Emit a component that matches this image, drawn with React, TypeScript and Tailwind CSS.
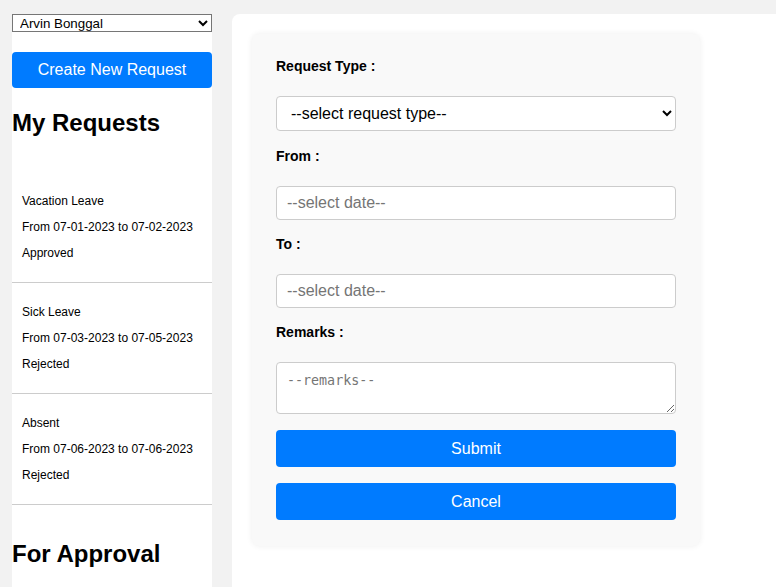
import React from 'react';

const requests = [
  { type: 'Vacation Leave', from: '07-01-2023', to: '07-02-2023', status: 'Approved' },
  { type: 'Sick Leave', from: '07-03-2023', to: '07-05-2023', status: 'Rejected' },
  { type: 'Absent', from: '07-06-2023', to: '07-06-2023', status: 'Rejected' },
];

export default function App() {
  return (
    <div className="min-h-screen bg-[#f2f2f2] flex gap-[20px] pt-[14px] pl-[12px] text-black font-['Liberation_Sans',Arial,sans-serif]">
      {/* Sidebar */}
      <aside className="w-[200px] shrink-0 bg-white">
        <select className="block w-full h-[18px] border border-[#767676] bg-white pl-[3px] text-[13.33px] leading-[16px]">
          <option>Arvin Bonggal</option>
        </select>
        <button className="mt-[20px] w-full h-[36px] rounded bg-[#007bff] text-white text-[16px]">
          Create New Request
        </button>
        <h2 className="mt-[21px] text-[24px] leading-[28px] font-bold">My Requests</h2>
        <div className="mt-[35px]">
          {requests.map((r, i) => (
            <div key={i} className="px-[10px] py-[22px] flex flex-col gap-[12px] border-b border-[#ccc] text-[12px] leading-[14px]">
              <p>{r.type}</p>
              <p>
                From {r.from} to {r.to}
              </p>
              <p>{r.status}</p>
            </div>
          ))}
        </div>
        <h2 className="mt-[35px] text-[24px] leading-[28px] font-bold">For Approval</h2>
      </aside>

      {/* Main */}
      <main className="flex-1 bg-white rounded-tl-lg p-[20px]">
        <div className="w-[448px] bg-[#f9f9f9] rounded-lg shadow-[0_0_6px_rgba(0,0,0,0.07)] px-[24px] pt-[24px] pb-[26px]">
          <label className="block text-[14px] leading-[16px] font-bold mb-[22px]">Request Type :</label>
          <select className="block w-full h-[35px] border border-[#ccc] rounded bg-white px-[10px] text-[16px]">
            <option>--select request type--</option>
          </select>

          <label className="block mt-[17px] text-[14px] leading-[16px] font-bold mb-[22px]">From :</label>
          <input
            type="text"
            placeholder="--select date--"
            className="block w-full h-[34px] border border-[#ccc] rounded bg-white px-[10px] text-[16px] placeholder:text-[#757575]"
          />

          <label className="block mt-[16px] text-[14px] leading-[16px] font-bold mb-[22px]">To :</label>
          <input
            type="text"
            placeholder="--select date--"
            className="block w-full h-[34px] border border-[#ccc] rounded bg-white px-[10px] text-[16px] placeholder:text-[#757575]"
          />

          <label className="block mt-[16px] text-[14px] leading-[16px] font-bold mb-[22px]">Remarks :</label>
          <textarea
            placeholder="--remarks--"
            className="block w-full h-[52px] border border-[#ccc] rounded bg-white p-[10px] text-[13.33px] leading-[16px] font-['DejaVu_Sans_Mono',monospace] placeholder:text-[#757575]"
          />

          <button className="mt-[16px] w-full h-[37px] rounded bg-[#007bff] text-white text-[16px]">Submit</button>
          <button className="mt-[16px] w-full h-[37px] rounded bg-[#007bff] text-white text-[16px]">Cancel</button>
        </div>
      </main>
    </div>
  );
}
